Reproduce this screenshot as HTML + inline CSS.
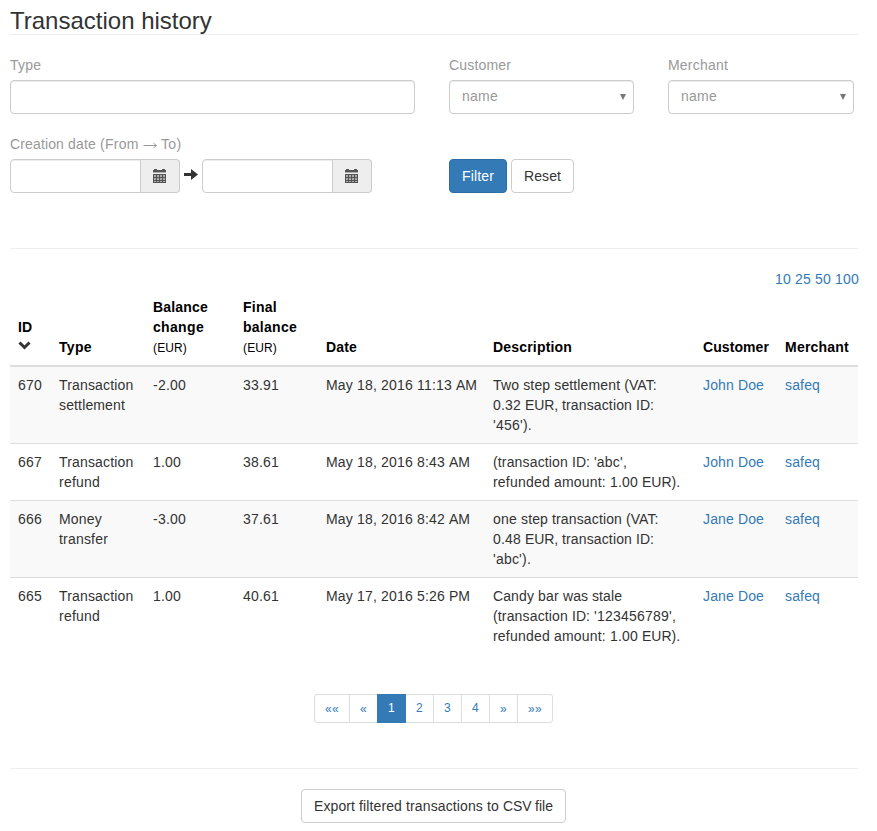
<!DOCTYPE html>
<html><head><meta charset="utf-8">
<style>
*{box-sizing:border-box;}
html,body{margin:0;padding:0;background:#fff;}
body{font-family:"Liberation Sans",sans-serif;font-size:14px;line-height:20px;color:#333;width:877px;height:831px;overflow:hidden;position:relative;}
.abs{position:absolute;}
h3{position:absolute;left:10px;top:8px;margin:0;font-size:24px;line-height:26px;font-weight:normal;color:#333;white-space:nowrap;}
.hr{position:absolute;left:10px;width:848px;height:1px;background:#eee;}
.lbl{position:absolute;color:#999;white-space:nowrap;}
.ctl{position:absolute;height:34px;border:1px solid #ccc;border-radius:4px;background:#fff;box-shadow:inset 0 1px 1px rgba(0,0,0,.075);}
.sel{color:#999;padding:5px 12px 7px;line-height:20px;white-space:nowrap;}
.caret{position:absolute;}
.addon{position:absolute;top:0;height:34px;background:#eee;border:1px solid #ccc;border-radius:0 4px 4px 0;}
.btn{position:absolute;height:34px;border:1px solid #ccc;border-radius:4px;background:#fff;color:#333;line-height:20px;padding:6px 12px;white-space:nowrap;}
.btn-primary{background:#337ab7;border-color:#2e6da4;color:#fff;}
a{color:#337ab7;text-decoration:none;}
table{position:absolute;left:10px;top:289px;width:848px;border-collapse:separate;border-spacing:0;table-layout:fixed;}
th,td{padding:8px;text-align:left;line-height:20px;white-space:nowrap;}
th{font-weight:bold;border-bottom:2px solid #ddd;color:#000;vertical-align:bottom;}
td{vertical-align:top;border-top:1px solid #ddd;}
tbody tr:first-child td{border-top:0;}
tbody tr:nth-child(odd) td{background:#f9f9f9;}
th small{font-size:12px;font-weight:normal;line-height:1;}
.pag{position:absolute;top:694px;left:314px;display:flex;}
.pag span.act,.pag span.{}
.pag>span{display:block;height:29px;padding:4px 10px 5px;font-size:12px;line-height:18px;border:1px solid #ddd;margin-left:-1px;color:#337ab7;background:#fff;white-space:nowrap;}
.pag>span:first-child{margin-left:0;border-radius:3px 0 0 3px;}
.pag>span:last-child{border-radius:0 3px 3px 0;}
.pag>span.act{background:#337ab7;border-color:#337ab7;color:#fff;position:relative;z-index:2;}
</style></head><body>
<h3>Transaction history</h3>
<div class="hr" style="top:34px"></div>

<div class="lbl" style="left:10px;top:55px"><span style="letter-spacing:0.219px">Type</span></div>
<div class="ctl" style="left:10px;top:80px;width:405px"></div>

<div class="lbl" style="left:449px;top:55px"><span style="letter-spacing:0.165px">Customer</span></div>
<div class="ctl sel" style="left:449px;top:80px;width:185px"><span style="letter-spacing:0.245px">name</span><svg class="caret" style="left:170px;top:13px" width="6" height="6" viewBox="0 0 6 6"><path d="M0 0H6L3 6Z" fill="#777"/></svg></div>

<div class="lbl" style="left:668px;top:55px"><span style="letter-spacing:0.205px">Merchant</span></div>
<div class="ctl sel" style="left:668px;top:80px;width:186px"><span style="letter-spacing:0.245px">name</span><svg class="caret" style="left:171px;top:13px" width="6" height="6" viewBox="0 0 6 6"><path d="M0 0H6L3 6Z" fill="#777"/></svg></div>

<div class="lbl" style="left:10px;top:134px"><span style="letter-spacing:0.133px">Creation </span><span style="letter-spacing:0.172px">date </span><span style="letter-spacing:0.298px">(From </span><svg style="display:inline-block;vertical-align:top;margin-top:8px" width="14" height="7" viewBox="0 0 14 7"><path d="M0.5 3.5H13.5M10.5 1.2L13.5 3.5L10.5 5.8" fill="none" stroke="#999" stroke-width="1"/></svg><span style="letter-spacing:0.110px"> </span><span style="letter-spacing:0.333px">To)</span></div>
<div class="ctl" style="left:10px;top:159px;width:131px;border-radius:4px 0 0 4px"></div>
<div class="abs" style="left:140px;top:159px;width:40px;height:34px"><div class="addon" style="left:1px;width:39px;border-left:0"></div><svg class="abs" style="left:13px;top:10px" width="13" height="14" viewBox="0 0 13 14"><g fill="#555"><rect x="1" y="0" width="3" height="1"/><rect x="9" y="0" width="3" height="1"/><rect x="0" y="1" width="13" height="2"/><rect x="0" y="5" width="13" height="9"/></g><rect x="0" y="3" width="13" height="1" fill="#aaa"/><g fill="#aaa"><rect x="1" y="6" width="2" height="2"/><rect x="4" y="6" width="2" height="2"/><rect x="7" y="6" width="2" height="2"/><rect x="10" y="6" width="2" height="2"/><rect x="1" y="9" width="2" height="2"/><rect x="4" y="9" width="2" height="2"/><rect x="7" y="9" width="2" height="2"/><rect x="10" y="9" width="2" height="2"/><rect x="1" y="12" width="2" height="1"/><rect x="4" y="12" width="2" height="1"/><rect x="7" y="12" width="2" height="1"/><rect x="10" y="12" width="2" height="1"/></g></svg></div>
<svg class="abs" style="left:183px;top:168px" width="16" height="13" viewBox="0 0 16 13"><path d="M1 5H9V8H1Z M8 1L15 6.5L8 12Z" fill="#333"/></svg>
<div class="ctl" style="left:202px;top:159px;width:131px;border-radius:4px 0 0 4px"></div>
<div class="abs" style="left:332px;top:159px;width:40px;height:34px"><div class="addon" style="left:1px;width:39px;border-left:0"></div><svg class="abs" style="left:13px;top:10px" width="13" height="14" viewBox="0 0 13 14"><g fill="#555"><rect x="1" y="0" width="3" height="1"/><rect x="9" y="0" width="3" height="1"/><rect x="0" y="1" width="13" height="2"/><rect x="0" y="5" width="13" height="9"/></g><rect x="0" y="3" width="13" height="1" fill="#aaa"/><g fill="#aaa"><rect x="1" y="6" width="2" height="2"/><rect x="4" y="6" width="2" height="2"/><rect x="7" y="6" width="2" height="2"/><rect x="10" y="6" width="2" height="2"/><rect x="1" y="9" width="2" height="2"/><rect x="4" y="9" width="2" height="2"/><rect x="7" y="9" width="2" height="2"/><rect x="10" y="9" width="2" height="2"/><rect x="1" y="12" width="2" height="1"/><rect x="4" y="12" width="2" height="1"/><rect x="7" y="12" width="2" height="1"/><rect x="10" y="12" width="2" height="1"/></g></svg></div>

<div class="btn btn-primary" style="left:449px;top:159px;width:58px"><span style="letter-spacing:0.148px">Filter</span></div>
<div class="btn" style="left:511px;top:159px;width:63px"><span style="letter-spacing:0.086px">Reset</span></div>

<div class="hr" style="top:248px"></div>

<div class="abs" style="right:18px;top:269px;white-space:nowrap"><a><span style="letter-spacing:0.179px">10 </span><span style="letter-spacing:0.179px">25 </span><span style="letter-spacing:0.179px">50 </span><span style="letter-spacing:0.214px">100</span></a></div>

<table>
<colgroup><col style="width:41px"><col style="width:94px"><col style="width:90px"><col style="width:83px"><col style="width:167px"><col style="width:210px"><col style="width:82px"><col style="width:81px"></colgroup>
<thead><tr>
<th><span style="letter-spacing:0.000px">ID</span><br><svg style="display:inline-block;vertical-align:top;margin-top:4px" width="14" height="10" viewBox="0 0 14 10"><path d="M1.5 1.5L6.5 6.5L11.5 1.5" fill="none" stroke="#333" stroke-width="3"/></svg></th>
<th><span style="letter-spacing:0.331px">Type</span></th>
<th><span style="letter-spacing:0.186px">Balance</span><br><span style="letter-spacing:0.331px">change</span><br><small><span style="letter-spacing:0.134px">(EUR)</span></small></th>
<th><span style="letter-spacing:0.266px">Final</span><br><span style="letter-spacing:0.266px">balance</span><br><small><span style="letter-spacing:0.134px">(EUR)</span></small></th>
<th><span style="letter-spacing:0.164px">Date</span></th>
<th><span style="letter-spacing:0.181px">Description</span></th>
<th><span style="letter-spacing:0.082px">Customer</span></th>
<th><span style="letter-spacing:0.221px">Merchant</span></th>
</tr></thead>
<tbody>
<tr><td><span style="letter-spacing:0.214px">670</span></td><td><span style="letter-spacing:0.169px">Transaction</span><br><span style="letter-spacing:0.141px">settlement</span></td><td><span style="letter-spacing:0.218px">-2.00</span></td><td><span style="letter-spacing:0.193px">33.91</span></td><td><span style="letter-spacing:0.166px">May </span><span style="letter-spacing:0.162px">18, </span><span style="letter-spacing:0.193px">2016 </span><span style="letter-spacing:0.179px">11:13 </span><span style="letter-spacing:0.000px">AM</span></td><td><span style="letter-spacing:0.166px">Two </span><span style="letter-spacing:0.130px">step </span><span style="letter-spacing:0.139px">settlement </span><span style="letter-spacing:0.044px">(VAT:</span><br><span style="letter-spacing:0.172px">0.32 </span><span style="letter-spacing:-0.068px">EUR, </span><span style="letter-spacing:0.136px">transaction </span><span style="letter-spacing:0.037px">ID:</span><br><span style="letter-spacing:0.249px">&#x27;456&#x27;).</span></td><td><a><span style="letter-spacing:0.150px">John </span><span style="letter-spacing:0.106px">Doe</span></a></td><td><a><span style="letter-spacing:0.150px">safeq</span></a></td></tr>
<tr><td><span style="letter-spacing:0.214px">667</span></td><td><span style="letter-spacing:0.169px">Transaction</span><br><span style="letter-spacing:0.217px">refund</span></td><td><span style="letter-spacing:0.188px">1.00</span></td><td><span style="letter-spacing:0.193px">38.61</span></td><td><span style="letter-spacing:0.166px">May </span><span style="letter-spacing:0.162px">18, </span><span style="letter-spacing:0.193px">2016 </span><span style="letter-spacing:0.172px">8:43 </span><span style="letter-spacing:0.000px">AM</span></td><td><span style="letter-spacing:0.151px">(transaction </span><span style="letter-spacing:0.055px">ID: </span><span style="letter-spacing:0.199px">&#x27;abc&#x27;,</span><br><span style="letter-spacing:0.205px">refunded </span><span style="letter-spacing:0.191px">amount: </span><span style="letter-spacing:0.172px">1.00 </span><span style="letter-spacing:-0.022px">EUR).</span></td><td><a><span style="letter-spacing:0.150px">John </span><span style="letter-spacing:0.106px">Doe</span></a></td><td><a><span style="letter-spacing:0.150px">safeq</span></a></td></tr>
<tr><td><span style="letter-spacing:0.214px">666</span></td><td><span style="letter-spacing:0.196px">Money</span><br><span style="letter-spacing:0.192px">transfer</span></td><td><span style="letter-spacing:0.218px">-3.00</span></td><td><span style="letter-spacing:0.193px">37.61</span></td><td><span style="letter-spacing:0.166px">May </span><span style="letter-spacing:0.162px">18, </span><span style="letter-spacing:0.193px">2016 </span><span style="letter-spacing:0.172px">8:42 </span><span style="letter-spacing:0.000px">AM</span></td><td><span style="letter-spacing:0.188px">one </span><span style="letter-spacing:0.130px">step </span><span style="letter-spacing:0.136px">transaction </span><span style="letter-spacing:0.044px">(VAT:</span><br><span style="letter-spacing:0.172px">0.48 </span><span style="letter-spacing:-0.068px">EUR, </span><span style="letter-spacing:0.136px">transaction </span><span style="letter-spacing:0.037px">ID:</span><br><span style="letter-spacing:0.219px">&#x27;abc&#x27;).</span></td><td><a><span style="letter-spacing:0.150px">Jane </span><span style="letter-spacing:0.106px">Doe</span></a></td><td><a><span style="letter-spacing:0.150px">safeq</span></a></td></tr>
<tr><td><span style="letter-spacing:0.214px">665</span></td><td><span style="letter-spacing:0.169px">Transaction</span><br><span style="letter-spacing:0.217px">refund</span></td><td><span style="letter-spacing:0.188px">1.00</span></td><td><span style="letter-spacing:0.193px">40.61</span></td><td><span style="letter-spacing:0.166px">May </span><span style="letter-spacing:0.162px">17, </span><span style="letter-spacing:0.193px">2016 </span><span style="letter-spacing:0.172px">5:26 </span><span style="letter-spacing:0.000px">PM</span></td><td><span style="letter-spacing:0.107px">Candy </span><span style="letter-spacing:0.219px">bar </span><span style="letter-spacing:0.053px">was </span><span style="letter-spacing:0.086px">stale</span><br><span style="letter-spacing:0.151px">(transaction </span><span style="letter-spacing:0.055px">ID: </span><span style="letter-spacing:0.224px">&#x27;123456789&#x27;,</span><br><span style="letter-spacing:0.205px">refunded </span><span style="letter-spacing:0.191px">amount: </span><span style="letter-spacing:0.172px">1.00 </span><span style="letter-spacing:-0.022px">EUR).</span></td><td><a><span style="letter-spacing:0.150px">Jane </span><span style="letter-spacing:0.106px">Doe</span></a></td><td><a><span style="letter-spacing:0.150px">safeq</span></a></td></tr>
</tbody>
</table>

<div class="pag"><span class=""><i style="font-style:normal;position:relative;top:1px"><span style="letter-spacing:0.326px">««</span></i></span><span class=""><i style="font-style:normal;position:relative;top:1px"><span style="letter-spacing:0.326px">«</span></i></span><span class="act"><span style="letter-spacing:0.326px">1</span></span><span class=""><span style="letter-spacing:0.326px">2</span></span><span class=""><span style="letter-spacing:0.326px">3</span></span><span class=""><span style="letter-spacing:0.326px">4</span></span><span class=""><i style="font-style:normal;position:relative;top:1px"><span style="letter-spacing:0.326px">»</span></i></span><span class=""><i style="font-style:normal;position:relative;top:1px"><span style="letter-spacing:0.326px">»»</span></i></span></div>

<div class="hr" style="top:768px"></div>
<div class="btn" style="left:301px;top:789px;width:265px"><span style="letter-spacing:0.093px">Export </span><span style="letter-spacing:0.121px">filtered </span><span style="letter-spacing:0.125px">transactions </span><span style="letter-spacing:0.145px">to </span><span style="letter-spacing:-0.169px">CSV </span><span style="letter-spacing:0.026px">file</span></div>
</body></html>
